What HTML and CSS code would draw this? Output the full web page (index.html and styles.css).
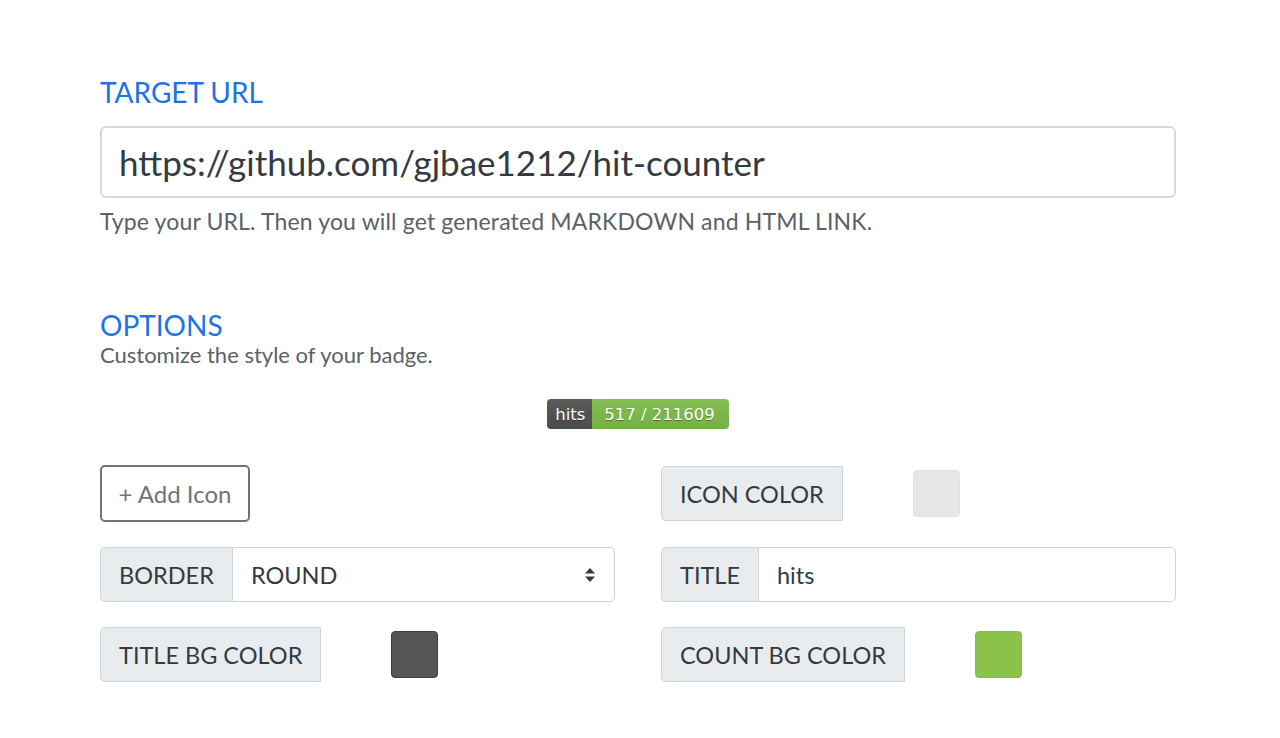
FILE: index.html
```html
<!DOCTYPE html>
<html lang="en">
<head>
<meta charset="utf-8">
<title>Hit Counter</title>
<link rel="stylesheet" href="styles.css">
</head>
<body>
<main class="page">
  <section class="section">
    <h2 class="heading">TARGET URL</h2>
    <input class="url-input" type="text" value="https://github.com/gjbae1212/hit-counter">
    <p class="help">Type your URL. Then you will get generated MARKDOWN and HTML LINK.</p>
  </section>

  <section class="section options">
    <h2 class="heading">OPTIONS</h2>
    <p class="sub">Customize the style of your badge.</p>

    <div class="badge-row">
      <span class="badge"><span class="badge-title">hits</span><span class="badge-count">517 / 211609</span></span>
    </div>

    <div class="grid">
      <div class="cell">
        <button class="add-btn" type="button">+ Add Icon</button>
      </div>
      <div class="cell">
        <span class="label solo">ICON COLOR</span>
        <span class="swatch swatch-icon"></span>
      </div>

      <div class="cell group">
        <span class="label">BORDER</span>
        <div class="select">
          <span>ROUND</span>
          <svg class="caret" width="12" height="16" viewBox="0 0 12 16"><path d="M6 1 L11 6.5 H1 Z" fill="#343a40"/><path d="M6 15 L11 9.5 H1 Z" fill="#343a40"/></svg>
        </div>
      </div>
      <div class="cell group">
        <span class="label">TITLE</span>
        <input class="text-input" type="text" value="hits">
      </div>

      <div class="cell">
        <span class="label solo">TITLE BG COLOR</span>
        <span class="swatch swatch-title"></span>
      </div>
      <div class="cell">
        <span class="label solo">COUNT BG COLOR</span>
        <span class="swatch swatch-count"></span>
      </div>
    </div>
  </section>
</main>
</body>
</html>
```

FILE: styles.css
```css
* { box-sizing: border-box; }

html, body {
  margin: 0;
  padding: 0;
  background: #ffffff;
}

body {
  font-family: Lato, "Open Sans", sans-serif;
  color: #343a40;
}

.page {
  width: 1076px;
  margin-left: 100px;
  padding-top: 75px;
}

.heading {
  margin: 0;
  font-size: 28px;
  line-height: 34px;
  font-weight: 400;
  color: #1b73e6;
}

.url-input {
  display: block;
  width: 100%;
  height: 72px;
  margin-top: 17px;
  padding: 0 17px;
  border: 2px solid #d6d9dc;
  border-radius: 6px;
  font-family: Lato, sans-serif;
  font-size: 35px;
  color: #343a40;
  background: #fff;
  outline: none;
}

.help {
  margin: 7px 0 0;
  font-size: 23px;
  letter-spacing: 0.15px;
  line-height: 33px;
  color: #5a6168;
}

.options {
  margin-top: 70px;
}

.sub {
  margin: 0;
  font-size: 22px;
  line-height: 26px;
  color: #5a6168;
}

.badge-row {
  display: flex;
  justify-content: center;
  margin-top: 31px;
}

.badge {
  display: inline-flex;
  height: 30px;
  border-radius: 4px;
  overflow: hidden;
  font-family: "DejaVu Sans", Verdana, sans-serif;
  font-size: 16.5px;
  color: #fff;
  text-shadow: 0 1px 0 rgba(0,0,0,0.35);
}

.badge-title {
  display: flex;
  align-items: center;
  padding: 0 7px 0 8px;
  background: linear-gradient(#5a5a5a, #4b4b4b);
}

.badge-count {
  display: flex;
  align-items: center;
  padding: 0 14px 0 12px;
  background: linear-gradient(#82bf50, #74b143);
}

.grid {
  display: grid;
  grid-template-columns: 515px 515px;
  column-gap: 46px;
  row-gap: 25px;
  margin-top: 36px;
}

.cell {
  display: flex;
  align-items: center;
  min-height: 55px;
}

.add-btn {
  height: 57px;
  width: 150px;
  padding: 0;
  border: 2px solid #6c757d;
  border-radius: 5px;
  background: #fff;
  font-family: Lato, sans-serif;
  font-size: 24px;
  color: #6c757d;
}

.label {
  display: flex;
  align-items: center;
  height: 55px;
  padding: 0 18px;
  background: #e9ecef;
  border: 1px solid #ced4da;
  border-radius: 5px 0 0 5px;
  font-size: 23.5px;
  color: #343a40;
  white-space: nowrap;
}

.group .label {
  border-right: none;
}

.select,
.text-input {
  flex: 1;
  height: 55px;
  border: 1px solid #ced4da;
  border-radius: 0 5px 5px 0;
  background: #fff;
  font-family: Lato, sans-serif;
  font-size: 23.5px;
  color: #343a40;
}

.select {
  display: flex;
  align-items: center;
  justify-content: space-between;
  padding: 0 18px 0 18px;
  border-left: 1px solid #ced4da;
}

.text-input {
  padding: 0 18px;
  outline: none;
}

.caret {
  display: block;
}

.swatch {
  width: 47px;
  height: 47px;
  margin-left: 70px;
  border-radius: 4px;
}

.swatch-icon {
  background: #e6e6e6;
  border: 1px solid #e0e0e0;
}

.swatch-title {
  background: #555555;
  border: 1px solid #3d3d3d;
}

.swatch-count {
  background: #8bc34a;
  border: 1px solid #86bd45;
}
```
